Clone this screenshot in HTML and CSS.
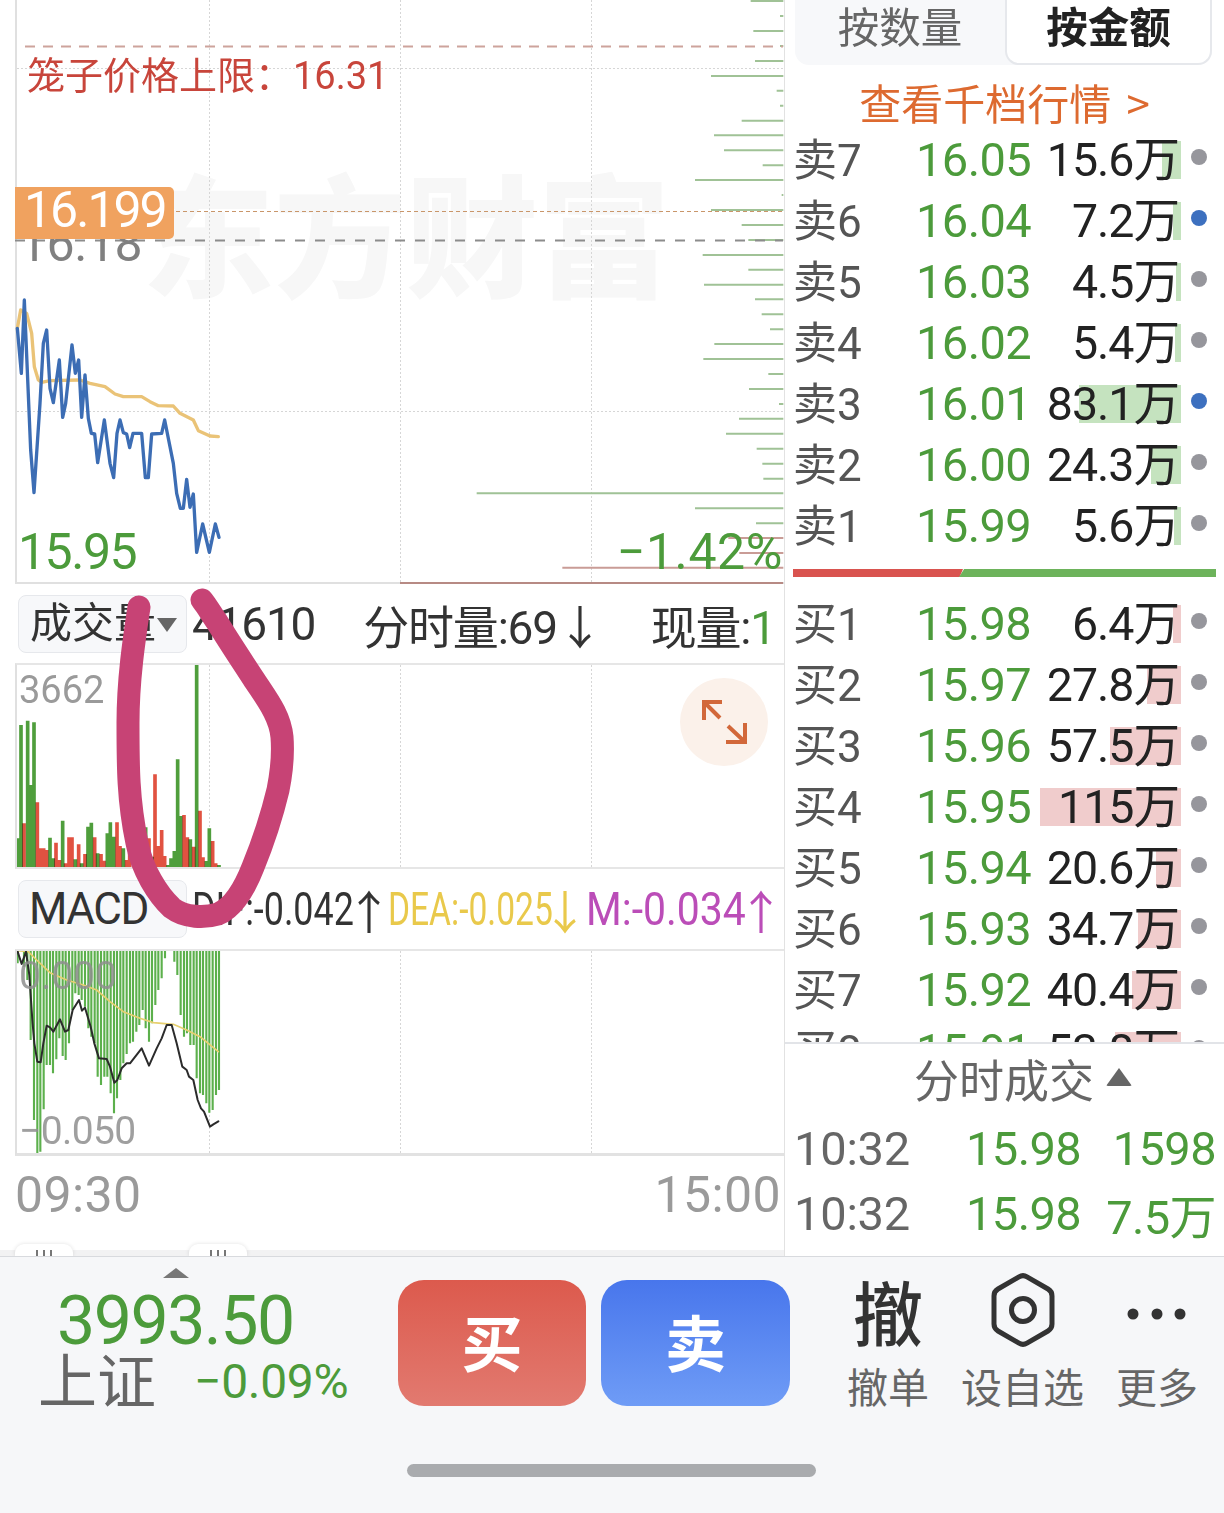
FILE: index.html
```html
<!DOCTYPE html>
<html lang="zh">
<head>
<meta charset="utf-8">
<title>分时</title>
<link rel="stylesheet" href="styles.css">
</head>
<body>
<div class="app">
  <div class="main">
    <section class="left">
      <div class="chart chart-price">
        <div class="watermark">东方财富</div>
        <svg class="plot" width="784" height="584" viewBox="0 0 784 584">
          <g class="grid">
            <path d="M17 68.5H784M17 411.5H784M209.5 0V584M400.5 0V584M591.5 0V584"/>
          </g>
          <g transform="translate(400 0) scale(.33333)">
            <path class="depth-g" d="M1052 3H1150M1140 48H1150M1060 93H1150M1140 138H1150M1065 183H1150M933 228H1150M1130 272H1150M1140 317H1150M1025 362H1150M942 406H1150M972 451H1150M1088 496H1150M885 540H1150M1145 585H1150M933 630H1150M1025 675H1150M1045 720H1150M908 765H1150M1045 809H1150M912 854H1150M1065 898H1150M1085 943H1150M1110 988H1150M943 1032H1150M910 1077H1150M1105 1122H1150M1047 1167H1150M1137 1212H1150M1017 1256H1150M978 1301H1150M1070 1346H1150M1087 1391H1150M1090 1436H1150M230 1480H1150M885 1525H1150M1068 1570H1150"/>
            <path class="depth-r" d="M985 1614H1150M1018 1659H1150M487 1703H1150"/>
          </g>
          <path class="limit-line" d="M25 46.5H783"/>
          <path class="cur-line" d="M15 211.5H783"/>
          <path class="pre-line" d="M15 240.5H783"/>
          <path class="base-red" d="M400 583H783"/>
          <g transform="translate(0 280) scale(.33333)">
            <path class="avg-line" d="M52 145L62 90 80 100 95 160 103 260 115 300 125 307 150 302 240 300 270 310 315 320 345 342 370 350 425 350 450 365 475 377 520 378 540 400 580 420 595 452 630 468 655 470"/>
            <path class="price-line" d="M52 145L64 280 73 60 92 510 102 638 120 370 130 190 140 150 150 325 160 368 178 240 188 412 197 370 216 195 226 280 236 240 245 412 255 285 265 415 274 460 284 462 293 548 313 420 330 550 341 593 351 460 360 420 370 458 380 462 389 503 399 460 425 460 436 593 445 593 455 462 485 460 494 420 520 550 530 640 541 685 550 685 560 598 570 682 580 642 590 817 608 732 628 817 646 732 657 772"/>
          </g>
        </svg>
        <div class="limit-label">笼子价格上限：<span class="limit-num">16.31</span></div>
        <div class="pre-label">16.18</div>
        <div class="cur-badge">16.199</div>
        <div class="low-label">15.95</div>
        <div class="pct-label">−1.42%</div>
      </div>

      <div class="stat-row stat-vol">
        <div class="select">成交量<i class="caret"></i></div>
        <span class="val-total">41610</span>
        <span class="val-fs">分时量:69↓</span>
        <span class="val-now">现量:<b class="up">1</b></span>
      </div>

      <div class="chart chart-vol">
        <svg class="plot" width="784" height="206" viewBox="0 0 784 206">
          <g class="grid"><path d="M209.5 0V206M400.5 0V206M591.5 0V206"/></g>
          <g transform="translate(0 -75) scale(.33333)">
            <path class="vol-g" d="M53 835V745M63 835V405M83 835V392M92 835V585M102 835V397M150 835V743M159 835V805M188 835V692M226 835V808M245 835V820M264 835V710M274 835V698M293 835V790M322 835V730M331 835V697M341 835V740M370 835V775M437 835V712M456 835V800M504 835V825M513 835V805M523 835V783M533 835V508M542 835V678M571 835V748M590 835V222M619 835V813M628 835V715M657 835V825"/>
            <path class="vol-r" d="M72 835V700M112 835V637M121 835V775M131 835V775M140 835V780M168 835V758M178 835V810M197 835V820M207 835V742M216 835V742M236 835V763M255 835V792M284 835V742M303 835V792M312 835V812M351 835V697M360 835V768M380 835V810M389 835V790M447 835V745M465 835V553M475 835V768M485 835V720M494 835V798M552 835V675M562 835V742M581 835V770M600 835V662M609 835V802M638 835V753M647 835V820"/>
          </g>
        </svg>
        <div class="vol-max">3662</div>
        <button class="expand" type="button" aria-label="expand">
          <svg width="88" height="88" viewBox="0 0 88 88"><path class="expand-icon" d="M24 42V24H42M24 24L40 40M65 45V64H46M65 64L48 48"/></svg>
        </button>
      </div>

      <div class="stat-row stat-macd">
        <div class="select select-macd">MACD</div>
        <span class="macd dif"><span class="macd-txt">DIF:-0.042</span>↑</span>
        <span class="macd dea"><span class="macd-txt">DEA:-0.025</span>↓</span>
        <span class="macd mm"><span class="macd-txt">M:-0.034</span>↑</span>
      </div>

      <div class="chart chart-macd">
        <svg class="plot" width="784" height="207" viewBox="0 0 784 207">
          <g class="grid"><path d="M209.5 0V207M400.5 0V207M591.5 0V207"/></g>
          <g transform="translate(0 -21) scale(.33333)">
            <path class="macd-bar" d="M53 62V100M72 62V110M82 62V150M92 62V330M102 62V570M112 62V672M121 62V665M131 62V538M140 62V405M150 62V405M159 62V430M169 62V388M178 62V325M188 62V378M197 62V390M207 62V340M217 62V240M226 62V190M236 62V195M245 62V210M255 62V230M265 62V295M274 62V320M284 62V340M293 62V440M303 62V465M313 62V440M322 62V440M332 62V490M342 62V550M351 62V505M361 62V450M370 62V400M380 62V372M390 62V340M399 62V335M409 62V305M418 62V285M428 62V240M437 62V295M447 62V335M456 62V280M466 62V225M475 62V180M485 62V145M495 62V85M523 62V95M532 62V135M542 62V255M552 62V320M561 62V310M571 62V345M581 62V345M590 62V445M600 62V490M609 62V495M619 62V520M628 62V548M638 62V540M648 62V495M657 62V480"/>
            <path class="dea-line" d="M52 62L85 65 110 90 150 128 200 150 250 165 290 180 330 215 370 245 420 265 460 278 520 283 560 300 600 320 655 365"/>
            <path class="dif-line" d="M52 62L65 102 78 65 88 135 97 270 103 340 112 395 122 397 130 340 140 287 150 292 160 305 180 268 195 305 205 300 218 240 237 210 246 242 255 233 272 290 283 340 297 385 320 387 330 410 343 458 352 450 365 415 380 400 390 400 425 355 447 407 470 355 485 325 500 285 515 285 530 340 547 410 560 420 567 440 580 450 593 510 603 535 612 545 630 590 640 583 655 574"/>
          </g>
        </svg>
        <div class="macd-top">0.000</div>
        <div class="macd-low">−0.050</div>
      </div>

      <div class="axis"><span>09:30</span><span>15:00</span></div>

      <div class="slider">
        <div class="handle"><i></i><i></i><i></i></div>
        <div class="handle handle-end"><i></i><i></i><i></i></div>
      </div>
    </section>

    <aside class="right">
      <div class="tabs">
        <div class="tab">按数量</div>
        <div class="tab tab-active">按金额</div>
      </div>
      <div class="more-link">查看千档行情 &gt;</div>

      <div class="book">
        <div class="asks">
          <div class="row"><span class="lab">卖7</span><span class="px">16.05</span><span class="amt"><i class="fill fill-g" style="width:19px"></i><em>15.6万</em></span><i class="dot"></i></div>
          <div class="row"><span class="lab">卖6</span><span class="px">16.04</span><span class="amt"><i class="fill fill-g" style="width:8px"></i><em>7.2万</em></span><i class="dot dot-blue"></i></div>
          <div class="row"><span class="lab">卖5</span><span class="px">16.03</span><span class="amt"><i class="fill fill-g" style="width:5px"></i><em>4.5万</em></span><i class="dot"></i></div>
          <div class="row"><span class="lab">卖4</span><span class="px">16.02</span><span class="amt"><i class="fill fill-g" style="width:6px"></i><em>5.4万</em></span><i class="dot"></i></div>
          <div class="row"><span class="lab">卖3</span><span class="px">16.01</span><span class="amt"><i class="fill fill-g" style="width:102px"></i><em>83.1万</em></span><i class="dot dot-blue"></i></div>
          <div class="row"><span class="lab">卖2</span><span class="px">16.00</span><span class="amt"><i class="fill fill-g" style="width:30px"></i><em>24.3万</em></span><i class="dot"></i></div>
          <div class="row"><span class="lab">卖1</span><span class="px">15.99</span><span class="amt"><i class="fill fill-g" style="width:7px"></i><em>5.6万</em></span><i class="dot"></i></div>
        </div>
        <div class="ratio"><i class="ratio-r"></i><i class="ratio-g"></i></div>
        <div class="bids">
          <div class="row"><span class="lab">买1</span><span class="px">15.98</span><span class="amt"><i class="fill fill-r" style="width:8px"></i><em>6.4万</em></span><i class="dot"></i></div>
          <div class="row"><span class="lab">买2</span><span class="px">15.97</span><span class="amt"><i class="fill fill-r" style="width:34px"></i><em>27.8万</em></span><i class="dot"></i></div>
          <div class="row"><span class="lab">买3</span><span class="px">15.96</span><span class="amt"><i class="fill fill-r" style="width:71px"></i><em>57.5万</em></span><i class="dot"></i></div>
          <div class="row"><span class="lab">买4</span><span class="px">15.95</span><span class="amt"><i class="fill fill-r" style="width:141px"></i><em>115万</em></span><i class="dot"></i></div>
          <div class="row"><span class="lab">买5</span><span class="px">15.94</span><span class="amt"><i class="fill fill-r" style="width:25px"></i><em>20.6万</em></span><i class="dot"></i></div>
          <div class="row"><span class="lab">买6</span><span class="px">15.93</span><span class="amt"><i class="fill fill-r" style="width:43px"></i><em>34.7万</em></span><i class="dot"></i></div>
          <div class="row"><span class="lab">买7</span><span class="px">15.92</span><span class="amt"><i class="fill fill-r" style="width:49px"></i><em>40.4万</em></span><i class="dot"></i></div>
          <div class="row"><span class="lab">买8</span><span class="px">15.91</span><span class="amt"><i class="fill fill-r" style="width:66px"></i><em>53.8万</em></span><i class="dot"></i></div>
        </div>
      </div>

      <div class="ticks">
        <div class="ticks-head">分时成交<i class="caret-up"></i></div>
        <div class="tick"><span class="t">10:32</span><span class="p">15.98</span><span class="v">1598</span></div>
        <div class="tick"><span class="t">10:32</span><span class="p">15.98</span><span class="v">7.5万</span></div>
      </div>
    </aside>
  </div>

  <footer class="bottom">
    <div class="index">
      <i class="index-caret"></i>
      <div class="index-val">3993.50</div>
      <div class="index-sub"><span class="index-name">上证</span><span class="index-pct">−0.09%</span></div>
    </div>
    <div class="btn btn-buy">买</div>
    <div class="btn btn-sell">卖</div>
    <div class="tools">
      <div class="tool tool-cancel"><span class="tool-glyph">撤</span><span class="tool-text">撤单</span></div>
      <div class="tool tool-fav">
        <svg class="tool-svg" width="70" height="76" viewBox="0 0 70 76"><path class="hex" d="M31 4.8a8 8 0 0 1 8 0L60 17a8 8 0 0 1 4 7V52a8 8 0 0 1-4 7L39 71.2a8 8 0 0 1-8 0L10 59a8 8 0 0 1-4-7V24a8 8 0 0 1 4-7Z"/><circle class="hex" cx="35" cy="38" r="11.5"/></svg>
        <span class="tool-text">设自选</span>
      </div>
      <div class="tool tool-more">
        <svg class="tool-svg" width="70" height="76" viewBox="0 0 70 76"><circle class="more-dot" cx="11" cy="42" r="5.5"/><circle class="more-dot" cx="35" cy="42" r="5.5"/><circle class="more-dot" cx="58" cy="42" r="5.5"/></svg>
        <span class="tool-text">更多</span>
      </div>
    </div>
    <div class="home-bar"></div>
  </footer>

  <svg class="scribble" width="320" height="350" viewBox="100 585 320 350"><path d="M139 607C134 640 128 680 128 723S128 800 137 843C142 870 158 895 172 908C185 918 205 918 218 914C232 908 244 890 253 867C262 845 272 815 278 790C282 770 283 750 282 737C280 715 266 698 253 678C240 658 228 640 217 622C212 615 207 606 202 600"/></svg>
</div>
</body>
</html>
```
FILE: styles.css
```css
* { box-sizing: border-box; }
html, body { margin: 0; padding: 0; background: #fff; }
body { font-family: Roboto, "Noto Sans CJK SC", sans-serif; color: #333; }
.app { position: relative; width: 1224px; height: 1513px; overflow: hidden; display: flex; flex-direction: column; }
.main { display: flex; height: 1256px; flex: none; }

/* left column */
.left { width: 784px; flex: none; display: flex; flex-direction: column; overflow: hidden; }
.chart { position: relative; flex: none; margin-left: 15px; width: 769px; border-left: 2px solid #e0e0e0; overflow: hidden; }
.plot { position: absolute; left: -17px; top: 0; display: block; }
.grid path { fill: none; stroke: #d6d6d6; stroke-width: 1; stroke-dasharray: 2 2; }
.chart-price { height: 584px; overflow: visible; border-bottom: 2px solid #e0e0e0; }
.chart-vol { height: 206px; border-top: 2px solid #e6e6e6; border-bottom: 2px solid #e6e6e6; }
.chart-macd { height: 207px; border-top: 2px solid #e6e6e6; border-bottom: 3px solid #e2e2e2; }

.depth-g, .depth-r { fill: none; stroke-width: 6; }
.depth-g { stroke: #a0c296; }
.depth-r { stroke: #c99c96; }
.limit-line { stroke: #cda39c; stroke-width: 2; stroke-dasharray: 10 8; }
.cur-line { stroke: #c9966a; stroke-width: 1; stroke-dasharray: 4 3; }
.pre-line { stroke: #8c8c8c; stroke-width: 2; stroke-dasharray: 10 10; }
.base-red { stroke: #b78a84; stroke-width: 2; }
.price-line, .avg-line, .dif-line, .dea-line { fill: none; stroke-linejoin: round; stroke-linecap: round; }
.price-line { stroke: #3c6db4; stroke-width: 10; }
.avg-line { stroke: #eac377; stroke-width: 10; }

.watermark { position: absolute; left: 125px; top: 150px; font-family: "Noto Sans CJK SC", sans-serif; font-size: 132px; line-height: 160px; font-weight: 900; color: #f7f7f7; white-space: nowrap; }
.limit-label { position: absolute; left: 10px; top: 48px; font-family: "Noto Sans CJK SC", sans-serif; font-size: 38px; line-height: 50px; color: #c8453b; white-space: nowrap; }
.limit-num { font-family: Roboto, sans-serif; }
.pre-label { position: absolute; left: 2px; top: 216px; font-size: 50px; line-height: 56px; letter-spacing: -.5px; color: #808080; }
.cur-badge { position: absolute; left: -2px; top: 187px; width: 159px; height: 52px; background: #f0a25f; border-radius: 0 5px 5px 0; color: #fff; font-size: 50px; line-height: 46px; letter-spacing: -2px; padding-left: 9px; }
.low-label { position: absolute; left: 1px; top: 524px; font-size: 50px; line-height: 56px; letter-spacing: -1.5px; color: #4c9b3b; }
.pct-label { position: absolute; right: 1px; top: 524px; font-size: 50px; line-height: 56px; letter-spacing: .6px; color: #4c9b3b; }

.stat-row { flex: none; position: relative; display: flex; align-items: center; white-space: nowrap; overflow: hidden; color: #333; font-family: Roboto, "Noto Sans CJK SC", sans-serif; }
.stat-vol { height: 79px; font-size: 46px; letter-spacing: -1.2px; }
.stat-macd { height: 80px; }
.select { flex: none; width: 169px; height: 58px; margin-left: 18px; padding-left: 11px; background: #f7f8fa; border: 1px solid #e6e8ec; border-radius: 8px; font-size: 42px; line-height: 56px; letter-spacing: 0; color: #333; position: relative; }
.select-macd { font-family: Roboto, sans-serif; font-size: 44px; letter-spacing: -1.5px; padding-left: 10px; }
.caret { position: absolute; right: 9px; top: 22px; width: 0; height: 0; border-left: 10px solid transparent; border-right: 10px solid transparent; border-top: 14px solid #666; }
.val-total { margin-left: 5px; }
.val-fs { margin-left: 48px; }
.val-now { margin-left: 49px; }
.up { font-weight: 400; color: #4c9b3b; }
.macd { flex: none; display: flex; align-items: center; width: 198px; font-size: 46px; }
.macd-txt { display: inline-block; width: 154px; white-space: nowrap; transform-origin: 0 50%; }
.dif { margin-left: 5px; width: 196px; color: #333; }
.dif .macd-txt { transform: scaleX(.78); }
.dea { color: #e9c94b; }
.dea .macd-txt { transform: scaleX(.73); }
.mm { color: #bb4db8; }
.mm .macd-txt { width: 152px; transform: scaleX(.89); }

.vol-g, .vol-r { fill: none; stroke-width: 11; }
.vol-g { stroke: #4f9e3c; }
.vol-r { stroke: #df4330; mix-blend-mode: multiply; opacity: .92; }
.vol-max { position: absolute; left: 2px; top: 0; font-size: 38px; line-height: 50px; color: #9a9a9a; }
.expand { position: absolute; left: 663px; top: 13px; width: 88px; height: 88px; padding: 0; border: 0; border-radius: 50%; background: #fbf1ea; }
.expand svg { display: block; }
.expand-icon { fill: none; stroke: #d2683a; stroke-width: 4; }

.macd-bar { fill: none; stroke: #5cb04c; stroke-width: 6.4; }
.dif-line { stroke: #2b2b2b; stroke-width: 6; }
.dea-line { stroke: #e7d06f; stroke-width: 5; }
.macd-top, .macd-low { position: absolute; font-size: 39px; line-height: 44px; color: #8f8f8f; opacity: .85; }
.macd-top { left: 2px; top: 3px; }
.macd-low { left: 2px; top: 158px; letter-spacing: -.6px; }

.axis { flex: none; height: 75px; display: flex; justify-content: space-between; align-items: center; padding: 2px 3px 0 15px; font-size: 50px; letter-spacing: .4px; color: #9a9a9a; }
.slider { flex: none; height: 25px; display: flex; align-items: flex-end; gap: 116px; padding-left: 15px; background: linear-gradient(#fff 0 19px, #f2f2f3 19px); }
.handle { width: 58px; height: 12px; background: #fff; border-radius: 9px 9px 0 0; box-shadow: 0 0 4px rgba(0,0,0,.12); display: flex; justify-content: center; align-items: flex-end; gap: 5px; }
.handle i { width: 2px; height: 6px; background: #777; }

/* right column */
.right { flex: 1; min-width: 0; display: flex; flex-direction: column; border-left: 1px solid #e2e2e2; position: relative; }
.tabs { flex: none; height: 65px; margin: 0 12px 0 10px; background: #f7f8fa; border-radius: 0 0 14px 14px; display: flex; font-family: "Noto Sans CJK SC", sans-serif; font-size: 41.5px; line-height: 50px; color: #666; }
.tab { flex: none; width: 210px; text-align: center; }
.tab-active { flex: 1; background: #fff; color: #222; font-weight: 700; border: 2px solid #e6e8ec; border-top: 0; border-radius: 0 0 14px 14px; }
.more-link { flex: none; height: 64px; text-align: center; font-family: "Noto Sans CJK SC", sans-serif; font-size: 42px; line-height: 74px; word-spacing: 6px; color: #dd6a30; }

.book { flex: none; height: 915px; overflow: hidden; border-bottom: 2px solid #e2e4e8; }
.row { height: 61px; display: flex; align-items: center; padding-left: 8px; position: relative; }
.lab { width: 123px; flex: none; margin-bottom: 6px; font-family: Roboto, "Noto Sans CJK SC", sans-serif; font-size: 44px; color: #555; white-space: nowrap; }
.px { width: 113px; flex: none; font-size: 47px; letter-spacing: -.6px; color: #4c9b3b; white-space: nowrap; }
.amt { width: 152px; flex: none; height: 38px; position: relative; display: flex; justify-content: flex-end; align-items: center; }
.amt em { position: relative; font-style: normal; font-size: 46.5px; line-height: 38px; letter-spacing: -1px; color: #222; padding-right: 2px; white-space: nowrap; font-family: Roboto, "Noto Sans CJK SC", sans-serif; }
.fill { position: absolute; right: 0; top: 0; bottom: 0; }
.fill-g { background: #c5e3bf; }
.fill-r { background: #f0cccc; }
.dot { width: 16px; height: 16px; border-radius: 50%; background: #96969c; margin-left: 10px; margin-bottom: 6px; flex: none; }
.dot-blue { background: #3d70bf; }
.ratio { height: 8px; margin: 13px 8px 16px; display: flex; }
.ratio-r { width: 170px; background: #d9534f; clip-path: polygon(0 0, 100% 0, 98% 100%, 0 100%); }
.ratio-g { flex: 1; background: #6db35b; margin-left: -4px; clip-path: polygon(2% 0, 100% 0, 100% 100%, 0 100%); }

.ticks { flex: 1; min-height: 0; padding: 0 8px 0 9px; }
.ticks-head { height: 72px; display: flex; justify-content: center; align-items: center; font-family: "Noto Sans CJK SC", sans-serif; font-size: 45px; color: #666; padding-left: 36px; padding-bottom: 3px; gap: 12px; }
.caret-up { width: 26px; height: 18px; background: #666; clip-path: polygon(50% 0, 100% 100%, 0 100%); border-radius: 2px; margin-top: -3px; }
.tick { height: 65px; display: flex; align-items: center; font-size: 47px; letter-spacing: -.6px; color: #4c9b3b; white-space: nowrap; }
.tick .t { color: #666; width: 172px; flex: none; letter-spacing: -.2px; }
.tick .p { width: 113px; flex: none; }
.tick .v { flex: 1; text-align: right; }

/* bottom bar */
.bottom { flex: 1; position: relative; display: flex; align-items: flex-start; background: #f6f7f9; border-top: 1px solid #d8dade; }
.index { flex: none; width: 398px; position: relative; height: 160px; }
.index-caret { position: absolute; left: 163px; top: 11px; width: 26px; height: 10px; background: #777; clip-path: polygon(50% 0, 100% 100%, 0 100%); }
.index-val { position: absolute; left: 57px; top: 26px; font-size: 68px; line-height: 76px; letter-spacing: -1.5px; color: #4c9b3b; }
.index-sub { position: absolute; left: 38px; top: 85px; display: flex; align-items: center; white-space: nowrap; }
.index-name { margin-bottom: 6px; font-family: "Noto Sans CJK SC", sans-serif; font-size: 59px; line-height: 72px; color: #666; }
.index-pct { margin-left: 38px; font-size: 48px; letter-spacing: -.3px; color: #4c9b3b; }
.btn { flex: none; width: 188px; height: 126px; margin-top: 23px; border-radius: 26px; color: #fff; text-align: center; font-family: "Noto Sans CJK SC", sans-serif; font-size: 61px; font-weight: 700; line-height: 122px; }
.btn-buy { background: linear-gradient(#dc5a4d, #e27a70); }
.btn-sell { margin-left: 15px; width: 189px; background: linear-gradient(#4876ec, #6f9cf6); }
.tools { flex: 1; display: flex; position: relative; height: 160px; padding-left: 57px; }
.tool { display: flex; flex-direction: column; align-items: center; font-family: "Noto Sans CJK SC", sans-serif; flex: none; }
.tool-cancel { width: 82px; }
.tool-fav { width: 123px; margin-left: 32px; }
.tool-more { width: 80px; margin-left: 33px; }
.tool-glyph { font-size: 70px; line-height: 80px; color: #333; height: 96px; padding-top: 14px; font-weight: 500; }
.tool-svg { flex: none; margin-top: 15px; margin-bottom: 5px; }
.tool-text { font-size: 41px; line-height: 56px; color: #666; white-space: nowrap; margin-top: 4px; }
.hex { fill: none; stroke: #333; stroke-width: 5; }
.more-dot { fill: #333; }
.home-bar { position: absolute; left: 407px; top: 207px; width: 409px; height: 13px; border-radius: 7px; background: #a9abae; }

.scribble { position: absolute; left: 100px; top: 585px; pointer-events: none; }
.scribble path { fill: none; stroke: #c74375; stroke-width: 23; stroke-linecap: round; stroke-linejoin: round; }
```
